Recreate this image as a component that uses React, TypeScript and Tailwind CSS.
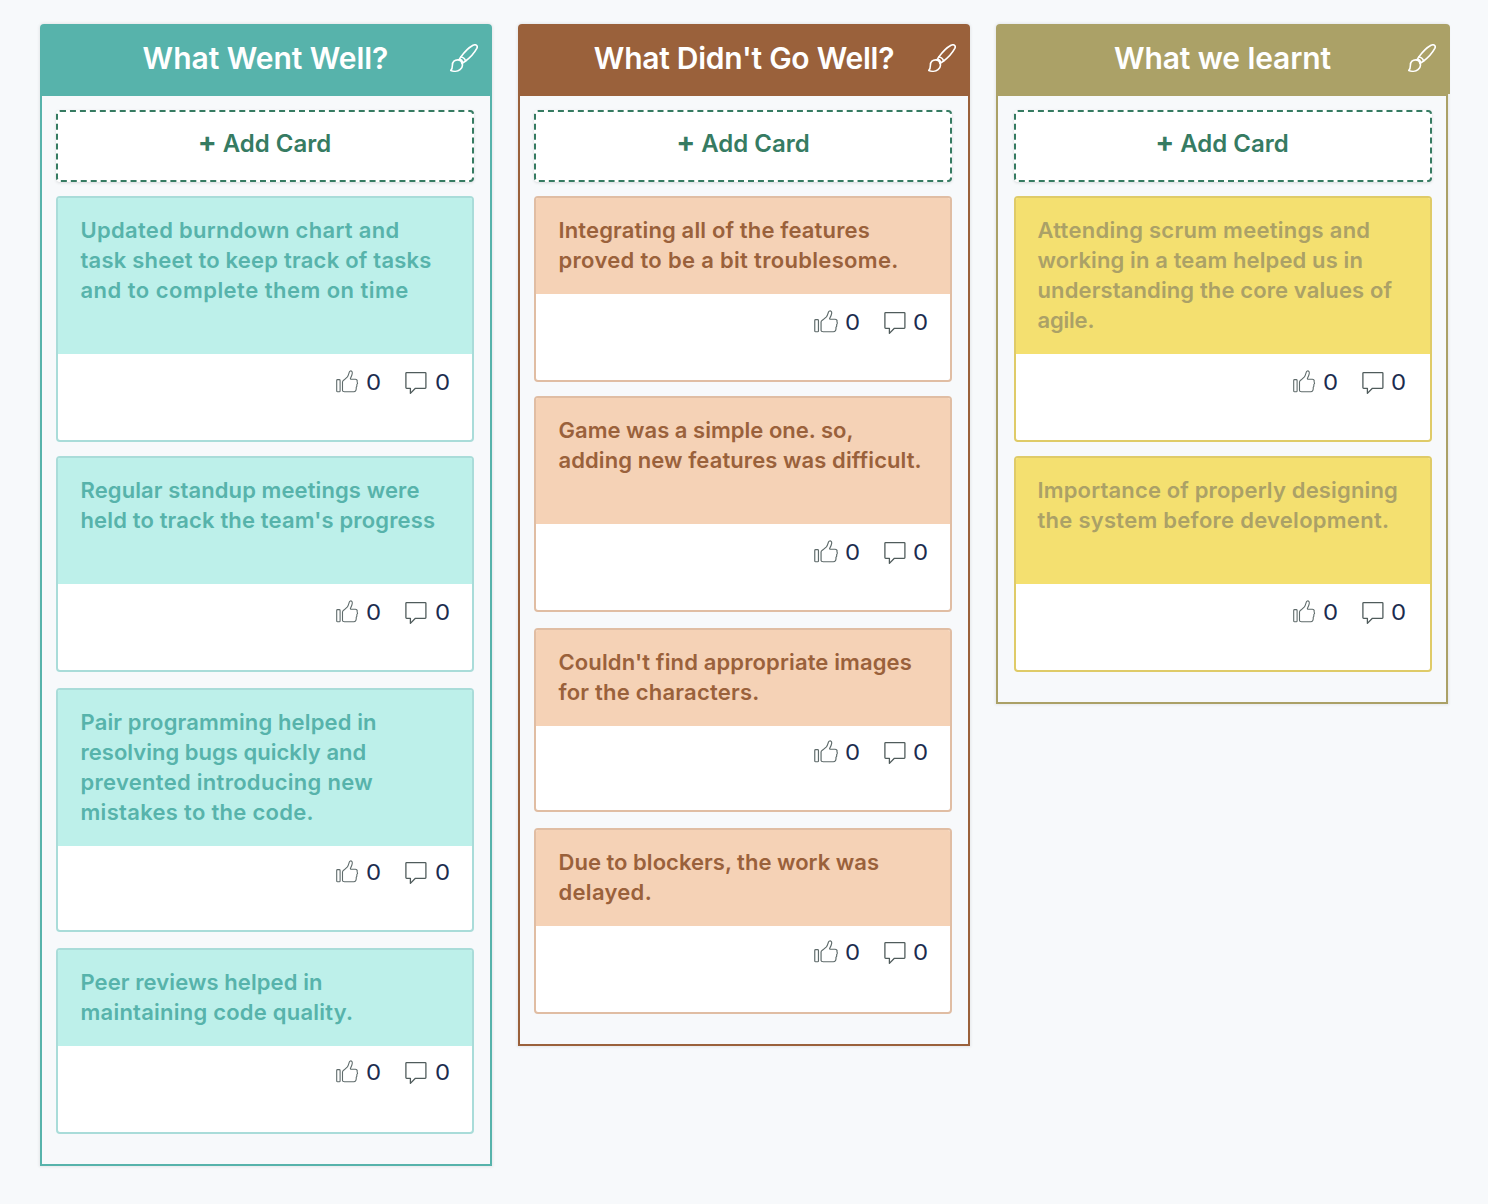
import React from "react";

type Line = [text: string, tracking: string];
type Card = { lines: Line[]; head: string; foot: string; gap: string };
type Column = {
  title: string;
  titleTracking: string;
  fill: string;
  outline: string;
  text: string;
  cardFill: string;
  cardOutline: string;
  headerWidth: string;
  padding: string;
  buttonPadding: string;
  textPadding: string;
  thumb: string;
  footerPadding: string;
  cards: Card[];
};

function Thumb({ className }: { className: string }) {
  return (
    <svg
      className={`h-6 shrink-0 ${className}`}
      viewBox="0 0 23 24"
      preserveAspectRatio="none"
      fill="none"
      stroke="#5f6b6b"
      strokeWidth="1.1"
      strokeLinejoin="round"
      strokeLinecap="round"
    >
      <rect x="0.7" y="9.6" width="3.4" height="12.2" rx="0.9" />
      <path d="M6.5 20.6 V12.1 C6.5 10.9 7.4 10.4 8.2 9.8 L11.4 6.8 C12.4 5.7 12.8 3.8 13.3 2.1 C13.7 0.8 15.1 0.6 15.8 1.3 C16.8 2.3 16 5.2 14.6 8 C14.2 8.8 14.2 9.3 14.9 9.3 H19.3 C20.9 9.3 21.6 10.6 21.1 11.8 C21.6 12.6 21.5 14.1 20.8 14.6 C21.1 15.6 20.8 16.8 20.2 17.4 C20.5 19.6 19.8 21.8 17.6 21.8 H8.5 C7.2 21.8 6.5 21.4 6.5 20.6 Z" />
    </svg>
  );
}

function Bubble() {
  return (
    <svg className="mt-px -ml-[0.5px] mr-[0.5px] h-6 w-[22px] shrink-0" viewBox="0 0 22 24" fill="none" stroke="#4f5b5b" strokeWidth="1.3" strokeLinejoin="round">
      <path d="M1.6 1.6 H20.2 Q20.9 1.6 20.9 2.3 V16.6 Q20.9 17.3 20.2 17.3 H10.4 L5.4 22.4 V17.3 H1.6 Q0.9 17.3 0.9 16.6 V2.3 Q0.9 1.6 1.6 1.6 Z" />
    </svg>
  );
}

function Brush() {
  return (
    <svg
      className="absolute top-5 right-[14px] h-7 w-7"
      viewBox="0 0 28 28"
      fill="none"
      stroke="#fff"
      strokeWidth="1.6"
      strokeLinejoin="round"
      strokeLinecap="round"
    >
      <path d="M10.8 13 C14 8.6 18 4 23 1.3 C26 -0.1 28.2 1.6 26.8 4.4 C24.2 9.2 20.4 13.4 15.6 17 C15 14.9 13.2 13.3 10.8 13 Z" />
      <path d="M10.8 13 L8.9 15.9 M15.6 17 L12.2 19.4" />
      <path d="M8.9 15.9 C10.8 14.6 13.4 17.2 12.2 19.6" />
      <path d="M8.9 15.9 C4.4 15.4 2.4 18 2.4 21.2 C2.4 23.8 1.8 25.4 0.8 26.4 C3.4 27.6 7.6 27.6 10 25.6 C12.2 23.8 12.9 21.8 12.2 19.6 C11.7 17.7 10.6 16.3 8.9 15.9 Z" />
    </svg>
  );
}

const Zero = () => (
  <span className="w-[14px] -translate-x-[0.5px] scale-x-[1.14] text-center text-[21px] leading-[26px] text-[#1c2c4f]">0</span>
);

const columns: Column[] = [
  {
    title: "What Went Well?",
    titleTracking: "tracking-[-0.05px]",
    fill: "bg-[#57b3ab]",
    outline: "border-[#57b3ab]",
    text: "text-[#57b3ab]",
    cardFill: "bg-[#bdf0ea]",
    cardOutline: "border-[#a9dcd9]",
    headerWidth: "w-[452px] pr-[1px]",
    padding: "pl-[14px]",
    buttonPadding: "pr-[1px]",
    textPadding: "pl-[22.5px]",
    thumb: "w-[23px] mr-[8px]",
    footerPadding: "pr-[22.5px]",
    cards: [
      {
        lines: [
          ["Updated burndown chart and", "tracking-[0.3px]"],
          ["task sheet to keep track of tasks", "tracking-[0.22px]"],
          ["and to complete them on time", "tracking-[0.48px]"],
        ],
        head: "h-[156px]",
        foot: "h-[86px] pt-[16px]",
        gap: "mt-[14px]",
      },
      {
        lines: [
          ["Regular standup meetings were", "tracking-[0.1px]"],
          ["held to track the team's progress", "tracking-[0.15px]"],
        ],
        head: "h-[126px]",
        foot: "h-[86px] pt-[16px]",
        gap: "mt-[14px]",
      },
      {
        lines: [
          ["Pair programming helped in", "tracking-[0.14px]"],
          ["resolving bugs quickly and", "tracking-[0.02px]"],
          ["prevented introducing new", "tracking-[0.29px]"],
          ["mistakes to the code.", "tracking-[0.3px]"],
        ],
        head: "h-[156px]",
        foot: "h-[84px] pt-[14px]",
        gap: "mt-4",
      },
      {
        lines: [
          ["Peer reviews helped in", "tracking-[0.09px]"],
          ["maintaining code quality.", "tracking-[0.23px]"],
        ],
        head: "h-[96px]",
        foot: "h-[86px] pt-[14px]",
        gap: "mt-4",
      },
    ],
  },
  {
    title: "What Didn't Go Well?",
    titleTracking: "tracking-[-0.26px]",
    fill: "bg-[#9a613b]",
    outline: "border-[#9a613b]",
    text: "text-[#9a613b]",
    cardFill: "bg-[#f5d2b6]",
    cardOutline: "border-[#e0bda3]",
    headerWidth: "w-[452px]",
    padding: "pl-[14px]",
    buttonPadding: "pr-0",
    textPadding: "pl-[22.5px]",
    thumb: "w-[25px] mr-[6.5px]",
    footerPadding: "pr-[22px]",
    cards: [
      {
        lines: [
          ["Integrating all of the features", "tracking-[0.15px]"],
          ["proved to be a bit troublesome.", "tracking-[0.32px]"],
        ],
        head: "h-[96px]",
        foot: "h-[86px] pt-[16px]",
        gap: "mt-[14px]",
      },
      {
        lines: [
          ["Game was a simple one. so,", "tracking-[0.02px]"],
          ["adding new features was difficult.", "tracking-[0.09px]"],
        ],
        head: "h-[126px]",
        foot: "h-[86px] pt-[16px]",
        gap: "mt-[14px]",
      },
      {
        lines: [
          ["Couldn't find appropriate images", "tracking-[0.13px]"],
          ["for the characters.", "tracking-[0.22px]"],
        ],
        head: "h-[96px]",
        foot: "h-[84px] pt-[14px]",
        gap: "mt-4",
      },
      {
        lines: [
          ["Due to blockers, the work was", "tracking-[0.03px]"],
          ["delayed.", "tracking-[0.3px]"],
        ],
        head: "h-[96px]",
        foot: "h-[86px] pt-[14px]",
        gap: "mt-4",
      },
    ],
  },
  {
    title: "What we learnt",
    titleTracking: "tracking-[-0.12px]",
    fill: "bg-[#aba167]",
    outline: "border-[#aba167]",
    text: "text-[#aba167]",
    cardFill: "bg-[#f4e070]",
    cardOutline: "border-[#dfcb68]",
    headerWidth: "w-[454px] pr-[1px]",
    padding: "pl-4",
    buttonPadding: "pr-[2px]",
    textPadding: "pl-[21.5px]",
    thumb: "w-[23px] mr-[7.5px]",
    footerPadding: "pr-[24px]",
    cards: [
      {
        lines: [
          ["Attending scrum meetings and", "tracking-[0.27px]"],
          ["working in a team helped us in", "tracking-[0.12px]"],
          ["understanding the core values of", "tracking-[0.12px]"],
          ["agile.", "tracking-[-0.2px]"],
        ],
        head: "h-[156px]",
        foot: "h-[86px] pt-[16px]",
        gap: "mt-[14px]",
      },
      {
        lines: [
          ["Importance of properly designing", "tracking-[0.16px]"],
          ["the system before development.", "tracking-[0.27px]"],
        ],
        head: "h-[126px]",
        foot: "h-[86px] pt-[16px]",
        gap: "mt-[14px]",
      },
    ],
  },
];

function RetroCard({ card, column }: { card: Card; column: Column }) {
  return (
    <article className={`w-[418px] overflow-hidden rounded border-2 bg-white ${column.cardOutline} ${card.gap}`}>
      <div className={`pt-[17px] text-[22px] leading-[30px] font-semibold ${column.textPadding} ${column.cardFill} ${column.text} ${card.head}`}>
        {card.lines.map(([text, tracking]) => (
          <p key={text} className={`whitespace-nowrap ${tracking}`}>
            {text}
          </p>
        ))}
      </div>
      <div className={`flex items-start justify-end ${card.foot} ${column.footerPadding}`}>
        <Thumb className={column.thumb} />
        <Zero />
        <span className="w-[24.5px]" />
        <Bubble />
        <span className="w-2" />
        <Zero />
      </div>
    </article>
  );
}

export default function App() {
  return (
    <main className="flex min-h-[1204px] items-start gap-[26px] bg-[#f7f9fb] pt-6 pl-10 font-['Inter',sans-serif]">
      {columns.map((column) => (
        <section key={column.title} className="w-[452px] shrink-0 rounded-t shadow-[0_0_3px_1px_rgba(0,0,0,0.07)]">
          <header className={`relative h-[70px] rounded-t pt-[19px] text-center ${column.fill} ${column.headerWidth}`}>
            <h2 className={`text-[30px] leading-[31px] font-semibold text-white ${column.titleTracking}`}>{column.title}</h2>
            <Brush />
          </header>
          <div className={`border-2 pt-[14px] pb-[30px] ${column.outline} ${column.padding}`}>
            <button
              className={`flex h-[72px] w-[418px] items-center justify-center rounded border-2 border-dashed border-[#367b62] bg-white pb-[4px] text-2xl font-semibold text-[#367b62] shadow-[0_1px_3px_rgba(0,0,0,0.12)] ${column.buttonPadding}`}
            >
              <span className="mr-[6px] -mt-[5px] text-[28px] leading-none font-bold">+</span>
              Add Card
            </button>
            {column.cards.map((card) => (
              <RetroCard key={card.lines[0][0]} card={card} column={column} />
            ))}
          </div>
        </section>
      ))}
    </main>
  );
}
